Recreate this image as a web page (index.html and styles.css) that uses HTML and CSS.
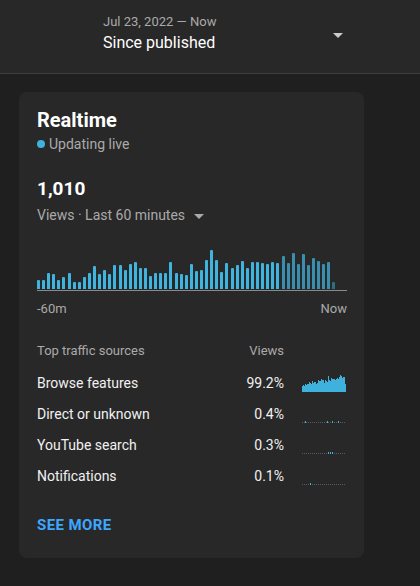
FILE: index.html
```html
<!DOCTYPE html>
<html lang="en">
<head>
    <meta charset="UTF-8" />
    <meta name="viewport" content="width=device-width, initial-scale=1.0" />
    <title>Realtime</title>
    <link rel="stylesheet" href="styles.css">
</head>
<body>
    <header class="range-bar">
        <div class="range-text">
            <div class="range-dates">Jul 23, 2022 — Now</div>
            <div class="range-label">Since published</div>
        </div>
        <span class="caret caret-light"></span>
    </header>

    <main class="card">
        <h2 class="card-title">Realtime</h2>
        <div class="live"><span class="live-dot"></span>Updating live</div>

        <div class="total">1,010</div>
        <div class="metric">Views · Last 60 minutes <span class="caret"></span></div>

        <div class="chart" id="chart"></div>
        <div class="chart-axis">
            <span>-60m</span>
            <span>Now</span>
        </div>

        <div class="sources">
            <div class="src-row src-head">
                <span class="src-name">Top traffic sources</span>
                <span class="src-val">Views</span>
                <span class="src-spark"></span>
            </div>
            <div class="src-row">
                <span class="src-name">Browse features</span>
                <span class="src-val">99.2%</span>
                <svg class="src-spark" id="spark-browse" width="44" height="18"></svg>
            </div>
            <div class="src-row">
                <span class="src-name">Direct or unknown</span>
                <span class="src-val">0.4%</span>
                <svg class="src-spark" data-ticks="3,25,30,36" width="44" height="18"></svg>
            </div>
            <div class="src-row">
                <span class="src-name">YouTube search</span>
                <span class="src-val">0.3%</span>
                <svg class="src-spark" data-ticks="26,28,30" width="44" height="18"></svg>
            </div>
            <div class="src-row">
                <span class="src-name">Notifications</span>
                <span class="src-val">0.1%</span>
                <svg class="src-spark" data-ticks="8" width="44" height="18"></svg>
            </div>
        </div>

        <a class="see-more" href="#">SEE MORE</a>
    </main>

    <script>
        const views = [9, 9, 16, 15, 9, 12, 16, 7, 7, 12, 16, 23, 15, 19, 15, 24, 24, 19, 25, 27,
            21, 21, 13, 16, 16, 16, 27, 16, 15, 14, 25, 18, 19, 29, 39, 29, 17, 26, 21, 24,
            28, 21, 27, 27, 26, 25, 27, 26, 33, 26, 36, 25, 35, 24, 31, 28, 25, 27, 7];

        const chart = document.getElementById('chart');
        views.forEach((v, i) => {
            const bar = document.createElement('div');
            bar.className = 'bar';
            if (i >= views.length - 11) bar.classList.add('bar-recent');
            if (i === views.length - 1) bar.classList.add('bar-now');
            bar.style.height = v + 'px';
            chart.appendChild(bar);
        });

        const ns = 'http://www.w3.org/2000/svg';
        function rect(svg, x, y, w, h, fill) {
            const r = document.createElementNS(ns, 'rect');
            r.setAttribute('x', x);
            r.setAttribute('y', y);
            r.setAttribute('width', w);
            r.setAttribute('height', h);
            r.setAttribute('fill', fill);
            svg.appendChild(r);
        }

        const browse = [6, 7, 6, 8, 7, 8, 8, 10, 9, 8, 11, 9, 10, 10, 8, 9, 12, 11, 11, 13, 12, 12,
            9, 12, 11, 10, 16, 12, 11, 14, 13, 13, 13, 12, 13, 14, 13, 15, 17, 16, 14, 15, 15, 8];
        const spark = document.getElementById('spark-browse');
        browse.forEach((h, i) => rect(spark, i, 18 - h, 1, h, '#3eb1dc'));

        document.querySelectorAll('svg[data-ticks]').forEach(svg => {
            for (let x = 0; x < 44; x += 2) rect(svg, x, 17, 1, 1, '#5a5a5a');
            svg.dataset.ticks.split(',').forEach(x => rect(svg, +x, 16, 1, 2, '#3eb1dc'));
        });
    </script>
</body>
</html>
```

FILE: styles.css
```css
* {
    margin: 0;
    padding: 0;
    box-sizing: border-box;
}

body {
    background-color: #1f1f1f;
    font-family: Roboto, "Noto Sans", sans-serif;
    color: #fff;
    min-height: 100vh;
}

.range-bar {
    height: 74px;
    background: #282828;
    border-bottom: 1px solid #3e3e3e;
    display: flex;
    align-items: center;
    padding: 0 77px 6px 103px;
}

.range-text {
    flex: 1;
}

.range-dates {
    font-size: 13px;
    line-height: 18px;
    color: #aaa;
}

.range-label {
    font-size: 16px;
    line-height: 24px;
    color: #fff;
}

.caret {
    display: inline-block;
    width: 0;
    height: 0;
    border-left: 5px solid transparent;
    border-right: 5px solid transparent;
    border-top: 5px solid #aaa;
    vertical-align: middle;
    margin-left: 5px;
}

.caret-light {
    border-top-color: #ccc;
    margin-top: 4px;
}

.card {
    display: block;
    width: 345px;
    margin: 18px 0 0 19px;
    padding: 14px 18px 22px;
    background: #282828;
    border-radius: 8px;
}

.card-title {
    font-size: 20px;
    font-weight: 700;
    line-height: 28px;
}

.live {
    display: flex;
    align-items: center;
    gap: 4px;
    margin-top: 1px;
    font-size: 14px;
    line-height: 18px;
    color: #aaa;
}

.live-dot {
    width: 8px;
    height: 8px;
    border-radius: 50%;
    background: #3eb1dc;
}

.total {
    margin-top: 23px;
    font-size: 19px;
    font-weight: 700;
    line-height: 26px;
}

.metric {
    margin-top: 3px;
    font-size: 14px;
    line-height: 20px;
    color: #aaa;
}

.chart {
    margin-top: 21px;
    height: 45px;
    display: flex;
    align-items: flex-end;
    gap: 2.1px;
    padding: 0 7px 1px 0;
    border-bottom: 1px solid #8a8a8a;
    width: 310px;
}

.bar {
    width: 3px;
    background: #3eb4de;
    border-radius: 1px 1px 0 0;
}

.bar-recent {
    background: #3a8fae;
}

.bar-now {
    background: #2f6f82;
}

.chart-axis {
    display: flex;
    justify-content: space-between;
    width: 310px;
    margin-top: 9px;
    font-size: 13px;
    line-height: 18px;
    color: #aaa;
}

.sources {
    margin-top: 21px;
}

.src-row {
    display: flex;
    align-items: center;
    height: 31px;
    font-size: 14px;
    color: #f1f1f1;
}

.src-head {
    height: 22px;
    margin-bottom: 6px;
    font-size: 13px;
    color: #aaa;
}

.src-name {
    flex: 1;
}

.src-val {
    text-align: right;
}

.src-spark {
    display: block;
    width: 44px;
    margin-left: 18px;
}

.see-more {
    display: inline-block;
    margin-top: 24px;
    font-size: 15px;
    font-weight: 700;
    letter-spacing: 0.4px;
    color: #3ea6ff;
    text-decoration: none;
    line-height: 21px;
}
```
